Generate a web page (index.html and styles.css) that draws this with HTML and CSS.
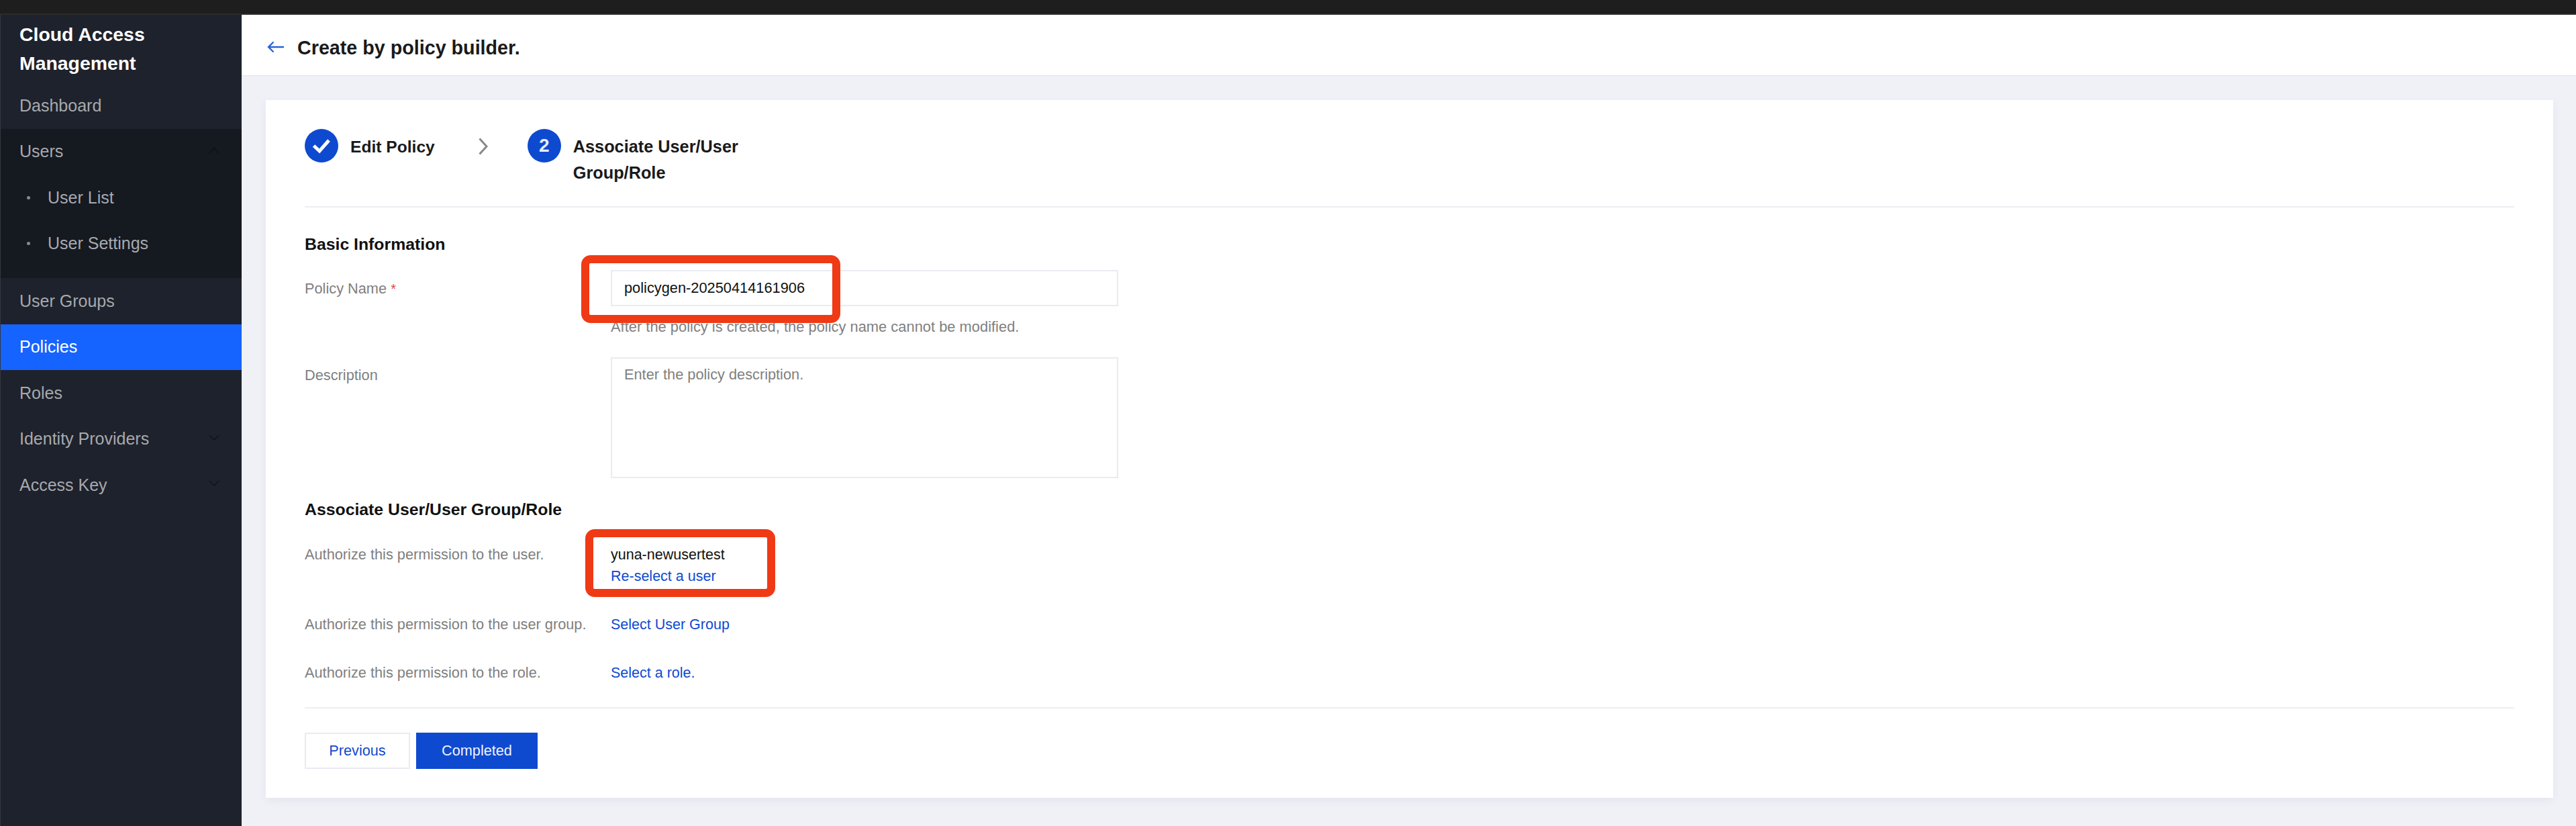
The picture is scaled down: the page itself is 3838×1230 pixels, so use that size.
FILE: index.html
```html
<!DOCTYPE html>
<html lang="en">
<head>
    <meta charset="UTF-8">
    <title>Create by policy builder</title>
    <link rel="stylesheet" href="styles.css">
</head>
<body>
    <div class="topbar"></div>
    <div class="layout">
        <div class="sidebar">
            <div class="side-title">Cloud Access Management</div>
            <div class="side-item">Dashboard</div>
            <div class="side-group">
                <div class="side-item">Users
                    <svg class="side-arrow" width="16" height="10" viewBox="0 0 16 10"><path d="M1 9L8 2L15 9" fill="none" stroke="#0e1116" stroke-width="1.6"/></svg>
                </div>
                <div class="side-item side-sub"><span class="dot"></span>User List</div>
                <div class="side-item side-sub"><span class="dot"></span>User Settings</div>
            </div>
            <div class="side-item">User Groups</div>
            <div class="side-item active">Policies</div>
            <div class="side-item">Roles</div>
            <div class="side-item">Identity Providers
                <svg class="side-arrow" width="16" height="10" viewBox="0 0 16 10"><path d="M1 1L8 8L15 1" fill="none" stroke="#12151b" stroke-width="1.6"/></svg>
            </div>
            <div class="side-item">Access Key
                <svg class="side-arrow" width="16" height="10" viewBox="0 0 16 10"><path d="M1 1L8 8L15 1" fill="none" stroke="#12151b" stroke-width="1.6"/></svg>
            </div>
        </div>

        <div class="main">
            <div class="header">
                <svg class="back" width="26" height="18" viewBox="0 0 26 18"><path d="M25 9H2M9.5 1.5L2 9L9.5 16.5" fill="none" stroke="#2a63dc" stroke-width="2.4"/></svg>
                <span class="page-title">Create by policy builder.</span>
            </div>

            <div class="card">
                <div class="steps">
                    <div class="step">
                        <span class="step-num">
                            <svg width="50" height="50" viewBox="0 0 50 50"><path d="M13.5 25L22 33L36 17" fill="none" stroke="#fff" stroke-width="5"/></svg>
                        </span>
                        <span class="step-text">Edit Policy</span>
                    </div>
                    <svg class="step-arrow" width="14" height="26" viewBox="0 0 14 26"><path d="M1.5 1.5L12 13L1.5 24.5" fill="none" stroke="#888" stroke-width="3"/></svg>
                    <div class="step">
                        <span class="step-num">2</span>
                        <span class="step-text step-wrap">Associate User/User Group/Role</span>
                    </div>
                </div>

                <h3 class="section-title">Basic Information</h3>
                <div class="form-row row-name">
                    <div class="label">Policy Name <span class="star">*</span></div>
                    <div class="field">
                        <div class="input">policygen-20250414161906</div>
                        <div class="help">After the policy is created, the policy name cannot be modified.</div>
                    </div>
                </div>
                <div class="form-row row-desc">
                    <div class="label">Description</div>
                    <div class="textarea">Enter the policy description.</div>
                </div>

                <h3 class="section-title second">Associate User/User Group/Role</h3>
                <div class="form-row row-user">
                    <div class="label">Authorize this permission to the user.</div>
                    <div>
                        <div class="value">yuna-newusertest</div>
                        <a class="link">Re-select a user</a>
                    </div>
                </div>
                <div class="form-row row-link">
                    <div class="label">Authorize this permission to the user group.</div>
                    <a class="link">Select User Group</a>
                </div>
                <div class="form-row row-link">
                    <div class="label">Authorize this permission to the role.</div>
                    <a class="link">Select a role.</a>
                </div>

                <div class="footer">
                    <button class="btn">Previous</button>
                    <button class="btn primary">Completed</button>
                </div>
            </div>
        </div>
    </div>

    <!-- red annotation boxes drawn over the screenshot -->
    <div class="mark mark-name"></div>
    <div class="mark mark-user"></div>
</body>
</html>
```

FILE: styles.css
```css
* {
    box-sizing: border-box;
}
html, body {
    height: 100%;
}
body {
    margin: 0;
    font-family: "Liberation Sans", Arial, sans-serif;
    font-size: 21.5px;
    color: #111;
    background-color: #f0f1f7;
    overflow: hidden;
    display: flex;
    flex-direction: column;
}
.topbar {
    height: 22px;
    flex: none;
    background-color: #1e1e1e;
    border-bottom: 2px solid #2b2b2b;
}
.layout {
    flex: 1;
    display: flex;
    min-height: 0;
}

/* Sidebar */
.sidebar {
    width: 360px;
    flex: none;
    background-color: #1e222c;
    border-left: 1px solid #34373e;
}
.side-title {
    padding: 8px 100px 7px 28px;
    font-size: 28.4px;
    font-weight: bold;
    line-height: 43px;
    color: #fff;
}
.side-item {
    display: flex;
    align-items: center;
    justify-content: space-between;
    height: 68.5px;
    padding: 0 33px 0 28px;
    font-size: 25px;
    color: #a7a9ae;
}
.side-item.active {
    background-color: #1664ff;
    color: #fff;
}
.side-group {
    background-color: #151920;
    padding-bottom: 17px;
}
.side-sub {
    justify-content: flex-start;
    padding-left: 39px;
}
.dot {
    width: 5px;
    height: 5px;
    margin-right: 26px;
    border-radius: 50%;
    background-color: #858a93;
}
.side-arrow {
    margin-top: -4px;
}

/* Main area */
.main {
    flex: 1;
    min-width: 0;
}
.header {
    display: flex;
    align-items: center;
    height: 91px;
    padding-left: 38px;
    padding-top: 5px;
    background-color: #fff;
    border-bottom: 1px solid #e3e5ec;
}
.back {
    margin-right: 19px;
}
.page-title {
    margin-top: 3px;
    font-size: 28.7px;
    font-weight: bold;
    color: #1a1a1a;
}
.card {
    height: 1039px;
    margin: 36px 34px 0 36px;
    padding: 43px 58px 0 58px;
    background-color: #fff;
    box-shadow: 0 4px 12px rgba(54, 58, 80, 0.06);
}

/* Steps */
.steps {
    display: flex;
    align-items: flex-start;
    height: 117px;
    border-bottom: 2px solid #eceef2;
}
.step {
    display: flex;
    align-items: flex-start;
}
.step-num {
    display: flex;
    align-items: center;
    justify-content: center;
    width: 50px;
    height: 50px;
    margin-right: 18px;
    border-radius: 50%;
    background-color: #0e4acf;
    color: #e8eeff;
    font-size: 28px;
    font-weight: bold;
}
.step-text {
    padding-top: 7px;
    font-size: 24.6px;
    font-weight: bold;
    line-height: 39px;
    color: #1a1a1a;
}
.step-wrap {
    width: 265px;
    font-size: 25.3px;
}
.step-arrow {
    margin: 13px 59px 0 65px;
}

/* Form */
.section-title {
    margin: 37px 0 0 0;
    font-size: 24.8px;
    line-height: 36px;
    color: #111;
}
.section-title.second {
    margin-top: 29px;
}
.form-row {
    display: grid;
    grid-template-columns: 456px 756px;
}
.label {
    color: #808080;
    font-size: 21.75px;
    line-height: 34px;
}
.star {
    color: #e54545;
    font-size: 20px;
}
.row-name {
    margin-top: 20px;
}
.row-name .label {
    padding-top: 11px;
}
.input {
    height: 54px;
    padding: 0 18px;
    border: 2px solid #e9ebf1;
    font-size: 21.8px;
    line-height: 50px;
    color: #111;
}
.help {
    margin-top: 14px;
    color: #808080;
    font-size: 21.9px;
    line-height: 34px;
}
.row-desc {
    margin-top: 28px;
}
.row-desc .label {
    padding-top: 10px;
}
.textarea {
    height: 180px;
    padding: 7px 18px;
    border: 2px solid #e9ebf1;
    font-size: 21.75px;
    line-height: 34px;
    color: #808080;
}
.row-user {
    margin-top: 32px;
}
.value {
    line-height: 34px;
    color: #111;
}
.link {
    display: block;
    color: #0e4acf;
    line-height: 31px;
}
.row-link {
    margin-top: 39px;
    line-height: 34px;
}
.row-link .link {
    line-height: 34px;
}
.row-link + .row-link {
    margin-top: 38px;
}
.footer {
    display: flex;
    gap: 9px;
    margin-top: 34px;
    padding-top: 36px;
    border-top: 2px solid #eceef2;
}
.btn {
    width: 157px;
    height: 54px;
    padding: 0;
    border: 2px solid #e9ebf1;
    background-color: #fff;
    color: #0e4acf;
    font-family: inherit;
    font-size: 21.7px;
}
.btn.primary {
    width: 181px;
    border-color: #0e4acf;
    background-color: #0e4acf;
    color: #eef2ff;
}

/* Red annotation boxes */
.mark {
    position: absolute;
    border: 12px solid #ef3a15;
    border-radius: 14px;
}
.mark-name {
    left: 866px;
    top: 380px;
    width: 386px;
    height: 101px;
}
.mark-user {
    left: 872px;
    top: 788px;
    width: 283px;
    height: 101px;
}
```
